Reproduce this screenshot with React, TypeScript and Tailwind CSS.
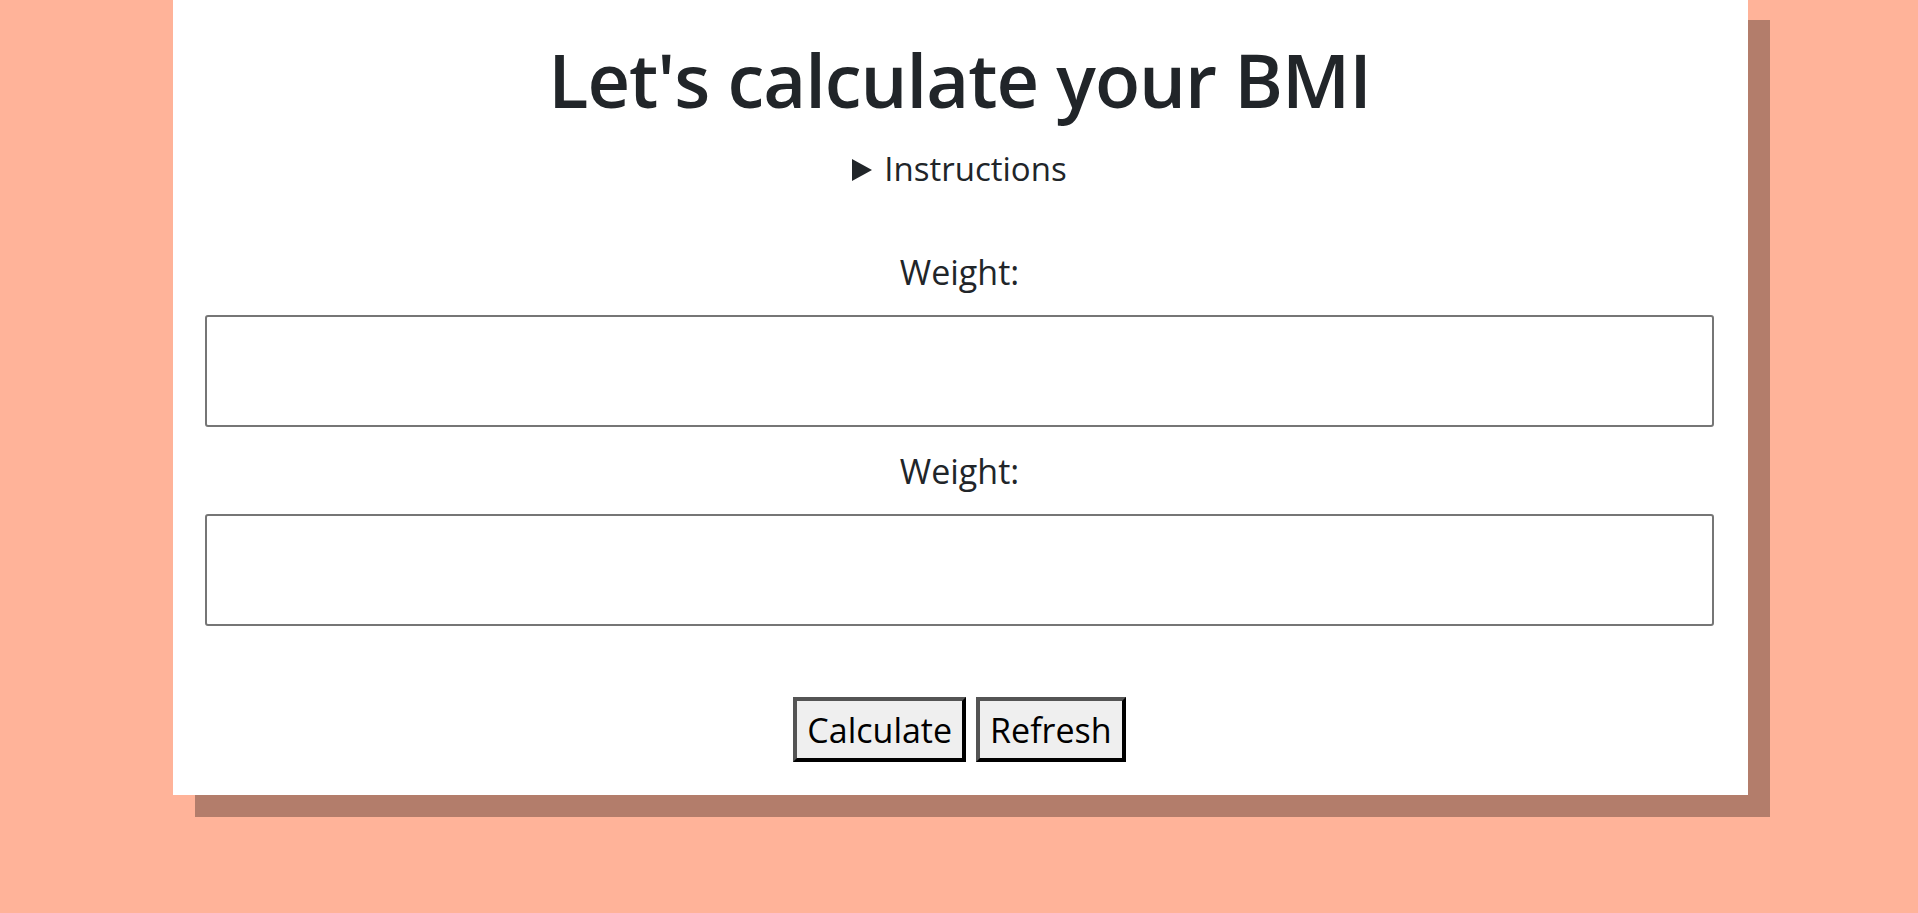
import { useState } from "react"

function Field({ label }: { label: string }) {
  return (
    <div className="flex flex-col items-center">
      <label className="block text-[34px] leading-[44px] mt-[22px] mb-[21px] text-[#212529]">{label}</label>
      <input
        type="text"
        className="block w-full h-[112px] border-2 border-[#767676] rounded-[3px] bg-white outline-none"
      />
    </div>
  )
}

export default function App() {
  const [open, setOpen] = useState(false)

  return (
    <div className="min-h-[913px] w-full bg-[#ffb399] overflow-hidden font-['Open_Sans','Noto_Sans',sans-serif]">
      <div className="ml-[173px] -mt-[2px] w-[1575px] bg-white shadow-[22px_22px_0_0_#b37d6b] pt-[36px] pb-[33px] pl-[32px] pr-[34px] text-center">
        <h1 className="text-[74px] leading-[92px] tracking-[-1px] font-semibold text-[#212529]">Let's calculate your BMI</h1>

        <details open={open} className="mt-[21px]">
          <summary
            onClick={(e) => {
              e.preventDefault()
              setOpen((o) => !o)
            }}
            className="list-none inline-flex items-center gap-[12px] cursor-pointer text-[33px] leading-[44px] text-[#212529]"
          >
            <svg width="20" height="22" viewBox="0 0 20 22" className="shrink-0 mt-[2px]">
              <path d="M0 0 L20 11 L0 22 Z" fill="#212529" />
            </svg>
            Instructions
          </summary>
        </details>

        <div className="mt-[37px]">
          <Field label="Weight:" />
          <Field label="Weight:" />
        </div>

        <div className="mt-[71px] flex justify-center gap-[10px]">
          <button className="h-[65px] px-[10px] bg-[#efefef] border-[4px] border-t-[#545454] border-l-[#545454] border-b-black border-r-black text-[34px] leading-none text-black">
            Calculate
          </button>
          <button className="h-[65px] px-[10px] bg-[#efefef] border-[4px] border-t-[#545454] border-l-[#545454] border-b-black border-r-black text-[34px] leading-none text-black">
            Refresh
          </button>
        </div>
      </div>
    </div>
  )
}
